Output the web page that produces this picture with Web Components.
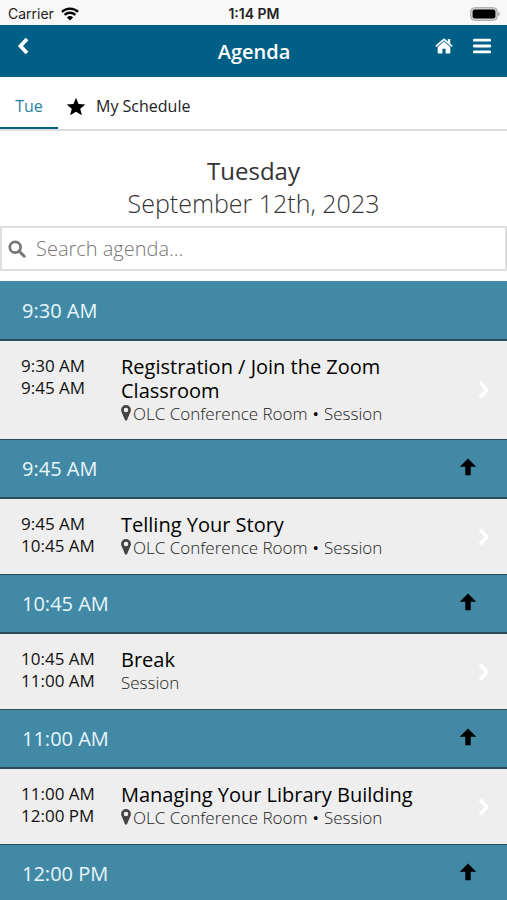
<!DOCTYPE html>
<html lang="en">
<head>
<meta charset="utf-8">
<meta name="viewport" content="width=device-width, initial-scale=1">
<title>Agenda</title>
<style>
  :root {
    --brand: #005f86;
    --band: #4189a5;
    --row: #eeeeee;
    --line: #2b4a5a;
  }
  body { margin: 0; background: #fff; color: #111; font-family: "Open Sans", "Noto Sans", sans-serif; }
</style>
</head>
<body>
<agenda-app></agenda-app>
<script>
class BaseElement extends HTMLElement {
  render(html) {
    const t = document.createElement('template');
    t.innerHTML = html;
    this.attachShadow({ mode: 'open' }).append(t.content.cloneNode(true));
  }
}

customElements.define('app-icon', class extends BaseElement {
  connectedCallback() {
    if (this.shadowRoot) return;
    const icons = {
      wifi: ['0 0 18 14', '<path d="M9 13.6 5.9 10.4a4.5 4.5 0 0 1 6.2 0z"/><path d="M3.6 7.9a7.8 7.8 0 0 1 10.8 0M.9 4.9a11.7 11.7 0 0 1 16.2 0" fill="none" stroke="currentColor" stroke-width="2.3"/>'],
      battery: ['0 0 30 14', '<rect x=".7" y=".7" width="26.6" height="12.6" rx="3.8" fill="#d5d5d5" stroke="#a3a3a3" stroke-width="1"/><rect x="2.6" y="2.4" width="22.8" height="9.2" rx="2"/><path d="M28.3 4.7q1.5.7 1.5 2.3t-1.5 2.3z" fill="#a3a3a3"/>'],
      left: ['0 0 12 18', '<path d="M10 2 3.5 9 10 16" fill="none" stroke="currentColor" stroke-width="3.8"/>'],
      right: ['0 0 12 18', '<path d="M2 1.5 8.8 9 2 16.5" fill="none" stroke="currentColor" stroke-width="3.4"/>'],
      home: ['0 0 18 16', '<path d="M9 3.6 15.3 9v5.6a.9.9 0 0 1-.9.9h-3.8v-4.7H7.4v4.7H3.6a.9.9 0 0 1-.9-.9V9z"/><path d="M.8 8.3 9 1.4l8.2 6.9" fill="none" stroke="currentColor" stroke-width="1.7"/><path d="M12.8 1h2.4v5l-2.4-2z"/>'],
      menu: ['0 0 18 16', '<path d="M1.2 2.2h15.6M1.2 8h15.6M1.2 13.8h15.6" stroke="currentColor" stroke-width="2.8" stroke-linecap="round"/>'],
      star: ['0 0 20 19', '<path d="m10 .8 2.6 6.1 6.8.5-5.2 4.3 1.7 6.6L10 14.8l-5.9 3.5 1.7-6.6L.6 7.4l6.8-.5z"/>'],
      search: ['0 0 18 18', '<circle cx="7.2" cy="7.2" r="5.4" fill="none" stroke="currentColor" stroke-width="2.7"/><path d="m11 11 5.2 5.2" stroke="currentColor" stroke-width="3" stroke-linecap="round"/>'],
      pin: ['0 0 10 16', '<path fill-rule="evenodd" d="M5 0a4.9 4.9 0 0 1 4.9 5c0 1-.3 1.9-.8 2.8L6.1 15q-1.1 1.3-2.2 0L.9 7.8C.4 6.9.1 6 .1 5A4.9 4.9 0 0 1 5 0zM5 2.7a2.3 2.3 0 1 0 0 4.6 2.3 2.3 0 0 0 0-4.6z"/>'],
      up: ['0 0 18 18', '<path d="m9 .4 8.2 8.4h-5.5v8.4H6.3V8.8H.8z"/>']
    };
    const [box, body] = icons[this.getAttribute('name')];
    const [, , w, h] = box.split(' ');
    this.render(`<style>:host{display:inline-flex;flex:none}svg{display:block;fill:currentColor}</style>
      <svg viewBox="${box}" width="${w}" height="${h}" aria-hidden="true">${body}</svg>`);
  }
});

customElements.define('status-bar', class extends BaseElement {
  connectedCallback() {
    this.render(`<style>
      :host { display: grid; grid-template-columns: 1fr auto 1fr; align-items: center; height: 25px; padding: 2px 7px 0 8px;
        box-sizing: border-box; background: #f8f8f8; font: 14px/20px Inter, "Liberation Sans", sans-serif; color: #222; }
      .carrier { display: flex; align-items: center; gap: 7px; }
      app-icon { color: #000; }
      .time { font-weight: 600; }
      .battery { justify-self: end; }
    </style>
    <span class="carrier"><span>Carrier</span><app-icon name="wifi"></app-icon></span>
    <span class="time">1:14 PM</span>
    <app-icon class="battery" name="battery"></app-icon>`);
  }
});

customElements.define('nav-header', class extends BaseElement {
  connectedCallback() {
    this.render(`<style>
      :host { display: grid; grid-template-columns: 1fr auto 1fr; height: 52px; padding: 0 16px 0 17px; box-sizing: border-box;
        background: var(--brand); color: #fff; }
      h1 { margin: 0; font-size: 20px; line-height: 54px; font-weight: 600; }
      button, a { display: flex; border: 0; padding: 0; background: none; color: inherit; }
      .back { justify-self: start; align-self: start; padding-top: 12px; }
      .tools { display: flex; justify-content: flex-end; align-items: flex-start; gap: 20px; padding-top: 13px; }
    </style>
    <button class="back" aria-label="Back"><app-icon name="left"></app-icon></button>
    <h1><slot></slot></h1>
    <div class="tools">
      <a href="#home" aria-label="Home"><app-icon name="home"></app-icon></a>
      <button aria-label="Menu"><app-icon name="menu"></app-icon></button>
    </div>`);
  }
});

customElements.define('day-tabs', class extends BaseElement {
  connectedCallback() {
    this.render(`<style>
      :host { display: flex; height: 54px; box-sizing: border-box; border-bottom: 2px solid #dcdcdc; }
      button { display: flex; align-items: center; gap: 10px; border: 0; border-bottom: 2px solid transparent; margin: 0;
        padding: 8px 8px 0; background: none; font: 16px/24px "Open Sans", sans-serif; color: #222; }
      .active { min-width: 58px; justify-content: center; color: #2b7f9f; border-color: var(--brand); }
      app-icon { color: #000; }
    </style>
    <button class="active" aria-pressed="true">Tue</button>
    <button aria-pressed="false"><app-icon name="star"></app-icon>My Schedule</button>`);
  }
});

customElements.define('day-title', class extends BaseElement {
  connectedCallback() {
    this.render(`<style>
      :host { display: block; padding: 24px 0 7px; text-align: center; font-size: 25px; line-height: 32px; color: #333; }
      h2, p { margin: 0; font-size: inherit; font-weight: 400; }
      h2 { font-size: 24px; }
      p { font-weight: 300; }
    </style>
    <h2><slot></slot></h2><p><slot name="date"></slot></p>`);
  }
});

customElements.define('agenda-search', class extends BaseElement {
  connectedCallback() {
    this.render(`<style>
      :host { display: block; margin-bottom: 10px; }
      label { display: flex; align-items: center; gap: 10px; height: 45px; box-sizing: border-box; padding: 0 7px 0 6px;
        border: 2px solid #dedede; color: #777; }
      input { flex: 1; min-width: 0; border: 0; padding: 0; outline: 0; background: none; font: 300 20px/28px "Open Sans", sans-serif; color: #333; }
      input::placeholder { color: #777; opacity: 1; }
    </style>
    <label><app-icon name="search"></app-icon><input type="text" aria-label="Search agenda" placeholder="Search agenda..."></label>`);
  }
});

customElements.define('time-band', class extends BaseElement {
  connectedCallback() {
    this.render(`<style>
      :host { display: flex; justify-content: space-between; align-items: center; height: 60px; box-sizing: border-box;
        padding: 0 30px 0 22px; background: var(--band); color: #e9f6fb;
        border-top: 1px solid var(--line); border-bottom: 2px solid var(--line); }
      :host([first]) { border-top-color: var(--band); }
      :host([first]) button { display: none; }
      h3 { margin: 0; font-size: 20px; line-height: 28px; font-weight: 400; }
      button { display: flex; border: 0; padding: 0 0 4px; background: none; color: #000; }
    </style>
    <h3><slot></slot></h3>
    <button aria-label="Back to top"><app-icon name="up"></app-icon></button>`);
  }
});

customElements.define('session-row', class extends BaseElement {
  connectedCallback() {
    const place = this.getAttribute('place');
    this.render(`<style>
      :host { display: block; background: var(--row); }
      a { display: grid; grid-template-columns: 100px 1fr auto; align-items: center; min-height: 75px; box-sizing: border-box;
        padding: 14px 17px 14px 21px; color: inherit; text-decoration: none; }
      .times, .info { align-self: start; }
      .times { font-size: 17px; line-height: 22px; }
      .times span { display: block; }
      .info { padding-right: 60px; }
      h4 { margin: 0; font-size: 20px; line-height: 24px; font-weight: 400; color: #000; }
      p { display: flex; align-items: center; gap: 5px; margin: 0; font-size: 17px; line-height: 22px; font-weight: 300; color: #222; }
      .place { display: flex; align-items: center; gap: 2px; }
      .place app-icon { padding-bottom: 3px; color: #444; }
      .dot { font-weight: 400; color: #000; }
      .go { color: #fff; }
    </style>
    <a href="#session">
      <div class="times"><span>${this.getAttribute('start')}</span><span>${this.getAttribute('end')}</span></div>
      <div class="info">
        <h4><slot></slot></h4>
        <p>${place ? `<span class="place"><app-icon name="pin"></app-icon>${place}</span><span class="dot">•</span>` : ''}<span>Session</span></p>
      </div>
      <app-icon class="go" name="right"></app-icon>
    </a>`);
  }
});

customElements.define('agenda-app', class extends BaseElement {
  connectedCallback() {
    this.render(`<style>
      :host { display: flex; flex-direction: column; height: 100vh; }
      status-bar, nav-header, day-tabs { flex: none; }
      main { flex: 1; min-height: 0; overflow-y: auto; scrollbar-width: none; }
    </style>
    <status-bar></status-bar>
    <nav-header>Agenda</nav-header>
    <day-tabs></day-tabs>
    <main>
      <day-title>Tuesday<span slot="date">September 12th, 2023</span></day-title>
      <agenda-search></agenda-search>
      <time-band first>9:30 AM</time-band>
      <session-row start="9:30 AM" end="9:45 AM" place="OLC Conference Room">Registration / Join the Zoom Classroom</session-row>
      <time-band>9:45 AM</time-band>
      <session-row start="9:45 AM" end="10:45 AM" place="OLC Conference Room">Telling Your Story</session-row>
      <time-band>10:45 AM</time-band>
      <session-row start="10:45 AM" end="11:00 AM">Break</session-row>
      <time-band>11:00 AM</time-band>
      <session-row start="11:00 AM" end="12:00 PM" place="OLC Conference Room">Managing Your Library Building</session-row>
      <time-band>12:00 PM</time-band>
    </main>`);
  }
});
</script>
</body>
</html>
